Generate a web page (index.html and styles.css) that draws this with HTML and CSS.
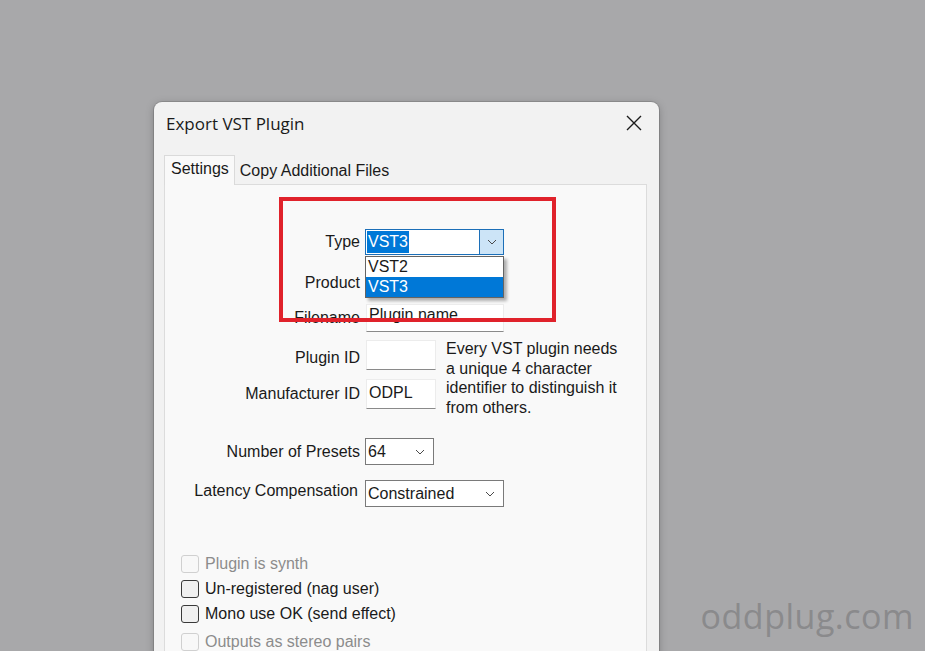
FILE: index.html
```html
<!DOCTYPE html>
<html lang="en">
<head>
    <meta charset="UTF-8">
    <meta name="viewport" content="width=device-width, initial-scale=1.0">
    <title>Export VST Plugin</title>
    <link rel="stylesheet" href="styles.css">
</head>
<body>

    <div class="dialog">
        <div class="titlebar">
            <span class="title">Export VST Plugin</span>
            <svg class="close" width="16" height="16" viewBox="0 0 16 16">
                <path d="M1 1 L15 15 M15 1 L1 15" stroke="#1c1c1c" stroke-width="1.4" fill="none"/>
            </svg>
        </div>

        <div class="tabs">
            <div class="tab active">Settings</div>
            <div class="tab">Copy Additional Files</div>
        </div>

        <div class="panel">
            <!-- Type row with open dropdown -->
            <div class="row row-type">
                <label class="label">Type</label>
                <div class="select select-open">
                    <span class="value"><span class="picked">VST3</span></span>
                    <span class="arrow-btn">
                        <svg width="10" height="6" viewBox="0 0 10 6"><polyline points="1,1 5,5 9,1" fill="none" stroke="#4a4a4a" stroke-width="1"/></svg>
                    </span>
                    <ul class="droplist">
                        <li>VST2</li>
                        <li class="hot">VST3</li>
                    </ul>
                </div>
            </div>

            <div class="row row-product">
                <label class="label">Product</label>
                <div class="input wide"></div>
            </div>

            <div class="row row-filename">
                <label class="label">Filename</label>
                <div class="input wide">Plugin name</div>
            </div>

            <div class="ids">
                <div class="ids-fields">
                    <div class="row row-id">
                        <label class="label label-low">Plugin ID</label>
                        <div class="input short"></div>
                    </div>
                    <div class="row row-id row-manuf">
                        <label class="label">Manufacturer ID</label>
                        <div class="input short">ODPL</div>
                    </div>
                </div>
                <p class="help">Every VST plugin needs a unique 4 character identifier to distinguish it from others.</p>
            </div>

            <div class="row row-presets">
                <label class="label">Number of Presets</label>
                <div class="select short-select">
                    <span class="value">64</span>
                    <svg width="10" height="6" viewBox="0 0 10 6"><polyline points="1,1 5,5 9,1" fill="none" stroke="#4a4a4a" stroke-width="1"/></svg>
                </div>
            </div>

            <div class="row row-latency">
                <label class="label label-up">Latency Compensation</label>
                <div class="select">
                    <span class="value">Constrained</span>
                    <svg width="10" height="6" viewBox="0 0 10 6"><polyline points="1,1 5,5 9,1" fill="none" stroke="#4a4a4a" stroke-width="1"/></svg>
                </div>
            </div>

            <div class="checks">
                <div class="check disabled"><span class="box"></span>Plugin is synth</div>
                <div class="check"><span class="box"></span>Un-registered (nag user)</div>
                <div class="check"><span class="box"></span>Mono use OK (send effect)</div>
                <div class="check disabled last"><span class="box"></span>Outputs as stereo pairs</div>
            </div>

            <!-- red annotation box -->
            <div class="highlight"></div>
        </div>
    </div>

    <div class="watermark">oddplug.com</div>

</body>
</html>
```

FILE: styles.css
```css
body {
    margin: 0;
    height: 651px;
    overflow: hidden;
    background-color: #a8a8aa;
    font-family: "Liberation Sans", Arial, sans-serif;
    font-size: 16px;
    color: #1a1a1a;
    position: relative;
}
.dialog {
    margin: 102px 0 0 154px;
    width: 505px;
    height: 600px;
    background-color: #f2f2f2;
    border-radius: 8px 8px 0 0;
    box-shadow: 0 0 0 1px rgba(0, 0, 0, 0.12), 0 2px 8px rgba(0, 0, 0, 0.25);
}
.titlebar {
    height: 42px;
    display: flex;
    align-items: center;
    justify-content: space-between;
    padding: 0 17px 0 12px;
}
.title {
    font-family: "Open Sans", "Noto Sans", sans-serif;
    font-size: 17px;
    color: #1a1a1a;
}
.tabs {
    margin: 11px 12px 0 10px;
    display: flex;
    align-items: flex-end;
}
.tab {
    height: 24px;
    line-height: 22px;
    padding: 0 5px;
}
.tab.active {
    height: 29px;
    line-height: 26px;
    padding: 0 5px 0 6px;
    background-color: #f9f9f9;
    border: 1px solid #dadada;
    border-bottom: none;
    margin-bottom: -1px;
    position: relative;
    z-index: 1;
}
.panel {
    margin: 0 12px 0 10px;
    height: 500px;
    background-color: #f9f9f9;
    border: 1px solid #dcdcdc;
    position: relative;
    padding-top: 44px;
    box-sizing: border-box;
}
.row {
    display: flex;
    align-items: center;
}
.label {
    width: 200px;
    padding-right: 5px;
    box-sizing: border-box;
    text-align: right;
}
.label-low {
    padding-top: 6px;
}
.label-up {
    padding-bottom: 6px;
    padding-right: 7px;
}
.row-type { height: 26px; }
.row-product { height: 28px; margin-top: 14px; }
.row-filename { height: 28px; margin-top: 7px; }
.ids {
    display: flex;
    align-items: flex-start;
    height: 69px;
    margin-top: 8px;
}
.row-id { height: 30px; }
.row-manuf { margin-top: 9px; }
.help {
    margin: -1px 0 0 10px;
    width: 176px;
    line-height: 19.7px;
}
.row-presets { height: 27px; margin-top: 29px; }
.row-latency { height: 27px; margin-top: 15px; }

.input {
    height: 100%;
    background-color: #ffffff;
    border: 1px solid #ececec;
    border-bottom-color: #8a8a8a;
    box-sizing: border-box;
    padding: 1px 2px;
    margin-left: 1px;
}
.input.wide { width: 138px; }
.input.short { width: 70px; padding-top: 4px; }

.select {
    height: 100%;
    width: 139px;
    box-sizing: border-box;
    background-color: #ffffff;
    border: 1px solid #7a7a7a;
    display: flex;
    align-items: center;
    justify-content: space-between;
    padding: 0 8px 0 2px;
    position: relative;
}
.short-select { width: 69px; }
.select-open {
    border-color: #1c6fb8;
    padding: 1px 0 1px 1px;
    align-items: stretch;
}
.picked {
    display: inline-block;
    height: 22px;
    line-height: 22px;
    padding: 0 1px;
    background-color: #0078d7;
    color: #ffffff;
}
.arrow-btn {
    width: 23px;
    margin: -1px 0;
    background-color: #cce4f7;
    border-left: 1px solid #1c6fb8;
    display: flex;
    align-items: center;
    justify-content: center;
}
.droplist {
    position: absolute;
    top: 26px;
    left: -1px;
    width: 139px;
    margin: 0;
    padding: 0;
    list-style: none;
    background-color: #ffffff;
    border: 1px solid #646464;
    box-sizing: border-box;
    box-shadow: 3px 3px 3px rgba(0, 0, 0, 0.3);
    z-index: 2;
}
.droplist li {
    height: 20px;
    line-height: 20px;
    padding-left: 2px;
}
.droplist li.hot {
    background-color: #0078d7;
    color: #ffffff;
}

.checks {
    margin: 44px 0 0 16px;
}
.check {
    height: 25px;
    display: flex;
    align-items: center;
    gap: 6px;
}
.check.last { margin-top: 3px; }
.box {
    width: 18px;
    height: 18px;
    box-sizing: border-box;
    border: 1px solid #3a3a3a;
    border-radius: 3px;
    background-color: #f0f0f0;
}
.check.disabled { color: #8c8c8c; }
.check.disabled .box {
    border-color: #d0d0d0;
    background-color: #f8f8f8;
}

.highlight {
    position: absolute;
    left: 114px;
    top: 12px;
    width: 277px;
    height: 125px;
    box-sizing: border-box;
    border: 4px solid #e0222b;
    z-index: 3;
}

.watermark {
    position: absolute;
    right: 11px;
    top: 593px;
    font-family: "Open Sans", "Noto Sans", sans-serif;
    font-size: 34px;
    color: #8a8a8c;
    letter-spacing: 0.5px;
}
```
